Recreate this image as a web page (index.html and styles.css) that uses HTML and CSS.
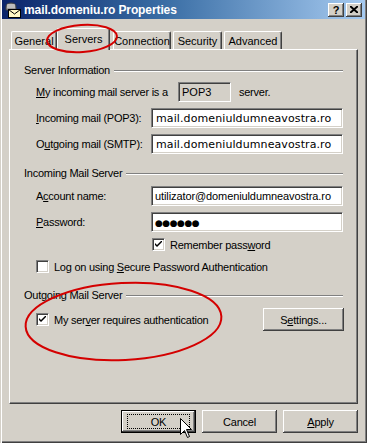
FILE: index.html
```html
<!DOCTYPE html>
<html>
<head>
<meta charset="utf-8">
<link rel="stylesheet" href="styles.css">
</head>
<body>
<div class="window">
  <div class="titlebar">
    <svg class="appicon" width="16" height="16" viewBox="0 0 16 16">
      <path d="M1 5 Q1 1 6 1 Q11 1 11 5 L11 8 L1 8 Z" fill="#9a9a9a" stroke="#404040" stroke-width="1"/>
      <path d="M2 3 H10 M2 5 H10" stroke="#e0e0e0" stroke-width="1"/>
      <rect x="3.5" y="7.5" width="12" height="8" fill="#fff8c8" stroke="#000" stroke-width="1"/>
      <path d="M3.5 7.5 L9.5 12 L15.5 7.5" fill="none" stroke="#000" stroke-width="1"/>
    </svg>
    <span class="title">mail.domeniu.ro Properties</span>
    <div class="caption-btns">
      <span class="cbtn q">?</span>
      <span class="cbtn"><svg width="8" height="7" viewBox="0 0 8 7"><path d="M0 0 L8 7 M8 0 L0 7" stroke="#000" stroke-width="2"/></svg></span>
    </div>
  </div>

  <div class="client">
    <div class="tabs">
      <div class="tab">General</div>
      <div class="tab active">Servers</div>
      <div class="tab">Connection</div>
      <div class="tab">Security</div>
      <div class="tab">Advanced</div>
    </div>

    <div class="panel">
      <div class="group-head g1"><span>Server Information</span><i class="etch"></i></div>
      <div class="row type-row">
        <span class="type-lbl"><u>M</u>y incoming mail server is a</span>
        <span class="ro-box">POP3</span>
        <span class="type-after">server.</span>
      </div>
      <div class="row field">
        <span class="lbl"><u>I</u>ncoming mail (POP3):</span>
        <div class="input mono">mail.domeniuldumneavostra.ro</div>
      </div>
      <div class="row field">
        <span class="lbl">O<u>u</u>tgoing mail (SMTP):</span>
        <div class="input mono">mail.domeniuldumneavostra.ro</div>
      </div>

      <div class="group-head g2"><span>Incoming Mail Server</span><i class="etch"></i></div>
      <div class="row field">
        <span class="lbl">A<u>c</u>count name:</span>
        <div class="input">utilizator@domeniuldumneavostra.ro</div>
      </div>
      <div class="row field">
        <span class="lbl"><u>P</u>assword:</span>
        <div class="input dots">●●●●●●</div>
      </div>
      <div class="row check-row remember">
        <span class="chk"><svg width="7" height="7" viewBox="0 0 7 7"><path d="M0 2 L0 4 L2 6 L7 1 L7 -1 L2 4 Z" fill="#000"/></svg></span>
        <span>Remember pass<u>w</u>ord</span>
      </div>
      <div class="row check-row spa">
        <span class="chk"></span>
        <span>Log on using <u>S</u>ecure Password Authentication</span>
      </div>

      <div class="group-head g3"><span>Outgoing Mail Server</span><i class="etch"></i></div>
      <div class="row auth-row">
        <div class="check-row">
          <span class="chk"><svg width="7" height="7" viewBox="0 0 7 7"><path d="M0 2 L0 4 L2 6 L7 1 L7 -1 L2 4 Z" fill="#000"/></svg></span>
          <span>My ser<u>v</u>er requires authentication</span>
        </div>
        <span class="btn settings">S<u>e</u>ttings...</span>
      </div>
    </div>

    <div class="buttons">
      <span class="btn default"><span class="focus">OK</span></span>
      <span class="btn">Cancel</span>
      <span class="btn"><u>A</u>pply</span>
    </div>
  </div>

  <svg class="annot" width="367" height="443" viewBox="0 0 367 443">
    <ellipse cx="82" cy="38.5" rx="35" ry="13.5" transform="rotate(-4 82 38.5)" fill="none" stroke="#d40000" stroke-width="2"/>
    <ellipse cx="123.5" cy="321.5" rx="98" ry="38.5" transform="rotate(-3 123.5 321.5)" fill="none" stroke="#d40000" stroke-width="2"/>
  </svg>

  <svg class="cursor" width="13" height="21" viewBox="0 0 13 21">
    <path d="M0.5 0.5 L0.5 16.5 L4.5 12.5 L7.5 19.5 L9.5 18.5 L6.5 11.5 L11.5 11.5 Z" fill="#fff" stroke="#000" stroke-width="1"/>
  </svg>
</div>
</body>
</html>
```

FILE: styles.css
```css
html, body {
  margin: 0;
  padding: 0;
  background: #d4d0c8;
}

.window {
  position: relative;
  width: 367px;
  height: 443px;
  box-sizing: border-box;
  background: #d4d0c8;
  font-family: "Liberation Sans", Arial, sans-serif;
  font-size: 11px;
  color: #000;
  box-shadow: inset 1px 0 #d4d0c8, inset 2px 0 #ffffff, inset -1px -1px #404040, inset -2px -2px #808080;
  overflow: hidden;
}

u { text-decoration: underline; text-underline-offset: 1px; }

/* ---------- title bar ---------- */
.titlebar {
  height: 19px;
  margin: 0 2px;
  display: flex;
  align-items: center;
  background: linear-gradient(to right, #0a246a 0%, #3a6ea5 45%, #a6caf0 100%);
}
.appicon { margin-left: 3px; margin-top: 1px; flex: none; }
.title {
  margin-left: 3px;
  color: #fff;
  font-weight: bold;
  font-size: 12px;
  letter-spacing: -0.1px;
}
.caption-btns {
  margin-left: auto;
  margin-right: 3px;
  display: flex;
  gap: 2px;
}
.cbtn {
  width: 16px;
  height: 14px;
  box-sizing: border-box;
  background: #d4d0c8;
  box-shadow: inset -1px -1px #404040, inset 1px 1px #ffffff, inset -2px -2px #808080, inset 2px 2px #d4d0c8;
  display: flex;
  align-items: center;
  justify-content: center;
  font-weight: bold;
  font-size: 11px;
  line-height: 1;
}
.cbtn.q { padding-top: 1px; }

/* ---------- client ---------- */
.client {
  padding: 9px 9px 0 9px;
}

.tabs {
  display: flex;
  align-items: flex-end;
  height: 21px;
  padding-left: 2px;
  position: relative;
  z-index: 2;
}
.tab {
  height: 18px;
  box-sizing: border-box;
  padding: 0 5px;
  margin-right: 2px;
  display: flex;
  align-items: center;
  justify-content: center;
  border-top: 1px solid #fff;
  border-left: 1px solid #fff;
  border-right: 1px solid #404040;
  border-radius: 2px 2px 0 0;
  box-shadow: inset -1px 0 #808080;
  background: #d4d0c8;
}
.tab:first-child { width: 46px; }
.tab:nth-child(3) { width: 58px; }
.tab:nth-child(4) { width: 49px; }
.tab:nth-child(5) { width: 58px; }
.tab.active {
  height: 22px;
  width: 53px;
  margin-left: -2px;
  margin-right: 3px;
  margin-bottom: -1px;
  padding-bottom: 2px;
}

.panel {
  height: 355px;
  box-sizing: border-box;
  border-top: 1px solid #fff;
  border-left: 1px solid #fff;
  border-right: 1px solid #404040;
  border-bottom: 1px solid #404040;
  box-shadow: inset -1px -1px #808080;
  padding: 13px 14px 0 14px;
  display: flex;
  flex-direction: column;
}

.group-head {
  height: 14px;
  display: flex;
  align-items: center;
  gap: 4px;
  white-space: nowrap;
  letter-spacing: -0.25px;
}
.etch {
  flex: 1;
  height: 0;
  border-top: 1px solid #808080;
  border-bottom: 1px solid #ffffff;
  margin-top: 1px;
}
.g2 { margin-top: 12px; }
.g3 { margin-top: 15px; }

.row {
  margin-left: 12px;
  letter-spacing: -0.25px;
}

.type-row {
  margin-top: 5px;
  display: flex;
  align-items: center;
  height: 20px;
}
.type-lbl { width: 142px; }
.ro-box {
  width: 53px;
  height: 20px;
  box-sizing: border-box;
  padding: 3px 0 0 3px;
  letter-spacing: 0;
  border-top: 1px solid #808080;
  border-left: 1px solid #808080;
  border-right: 1px solid #fff;
  border-bottom: 1px solid #fff;
  box-shadow: inset 1px 1px #404040, inset -1px -1px #d4d0c8;
}
.type-after { margin-left: 8px; }

.field {
  margin-top: 6px;
  display: grid;
  grid-template-columns: 115px 1fr;
  align-items: center;
  height: 20px;
}
.input {
  height: 20px;
  box-sizing: border-box;
  background: #fff;
  border-top: 1px solid #808080;
  border-left: 1px solid #808080;
  border-right: 1px solid #fff;
  border-bottom: 1px solid #fff;
  box-shadow: inset 1px 1px #404040, inset -1px -1px #d4d0c8;
  padding: 3px 0 0 3px;
  white-space: nowrap;
  overflow: hidden;
  letter-spacing: -0.1px;
  line-height: 13px;
}
.input.mono {
  font-family: "DejaVu Sans", Verdana, sans-serif;
  font-size: 11px;
  letter-spacing: 0.1px;
  padding-left: 4px;
}
.input.dots {
  font-family: "DejaVu Sans", sans-serif;
  font-size: 9px;
  letter-spacing: -0.5px;
  padding-top: 4px;
}

.check-row {
  display: flex;
  align-items: center;
  gap: 5px;
  height: 13px;
  white-space: nowrap;
}
.remember { margin-top: 6px; margin-left: 128px; }
.spa { margin-top: 9px; }

.chk {
  width: 13px;
  height: 13px;
  box-sizing: border-box;
  flex: none;
  background: #fff;
  border-top: 1px solid #808080;
  border-left: 1px solid #808080;
  border-right: 1px solid #fff;
  border-bottom: 1px solid #fff;
  box-shadow: inset 1px 1px #404040, inset -1px -1px #d4d0c8;
  display: flex;
  align-items: center;
  justify-content: center;
}

.auth-row {
  margin-top: 6px;
  display: flex;
  align-items: center;
  justify-content: space-between;
  height: 23px;
}

.btn {
  height: 23px;
  box-sizing: border-box;
  background: #d4d0c8;
  box-shadow: inset -1px -1px #404040, inset 1px 1px #ffffff, inset -2px -2px #808080, inset 2px 2px #d4d0c8;
  display: flex;
  align-items: center;
  justify-content: center;
  letter-spacing: -0.2px;
}
.settings { width: 81px; margin-right: -1px; }

.buttons {
  margin-top: 6px;
  display: flex;
  justify-content: flex-end;
  gap: 6px;
}
.buttons .btn { width: 75px; }
.btn.default {
  border: 1px solid #000;
  box-shadow: inset -1px -1px #404040, inset 1px 1px #ffffff, inset -2px -2px #808080;
}
.focus {
  width: 63px;
  height: 15px;
  box-sizing: border-box;
  border: 1px dotted #000;
  display: flex;
  align-items: center;
  justify-content: center;
}

/* ---------- overlays ---------- */
.annot {
  position: absolute;
  left: 0;
  top: 0;
  pointer-events: none;
  z-index: 5;
}
.cursor {
  position: absolute;
  left: 180px;
  top: 418px;
  z-index: 6;
}
```
